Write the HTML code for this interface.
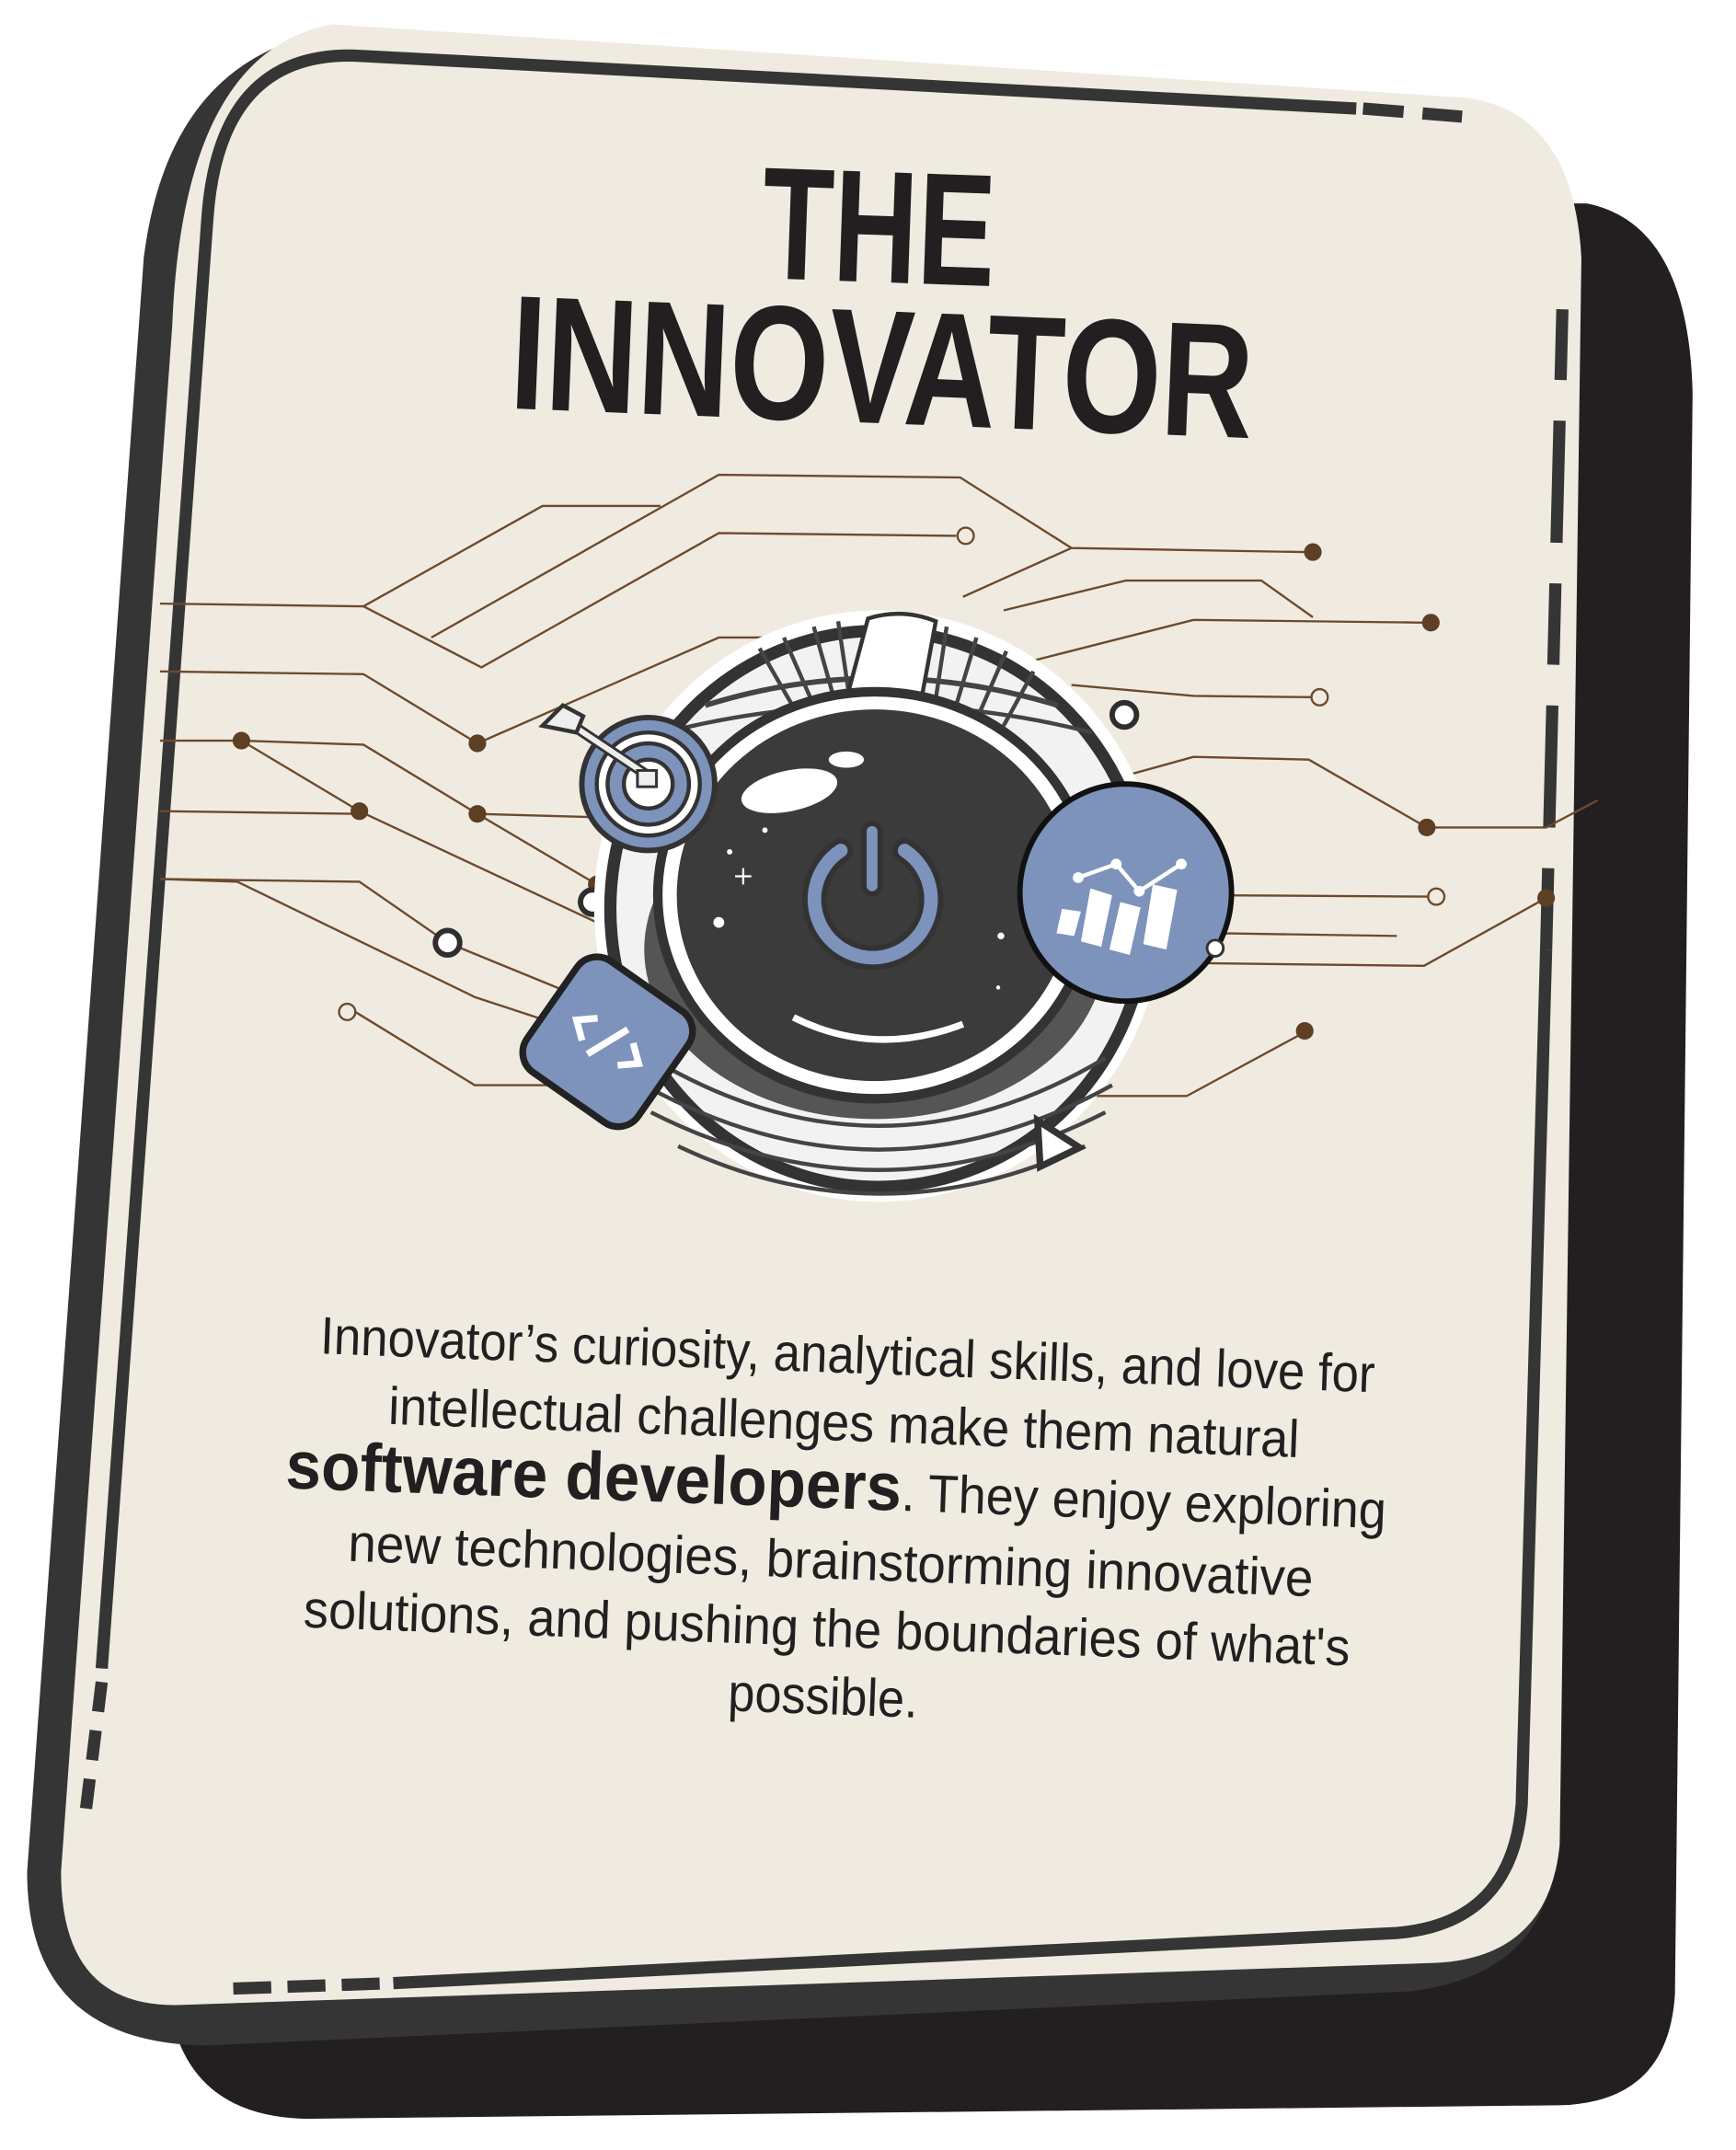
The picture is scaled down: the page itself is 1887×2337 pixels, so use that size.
<!DOCTYPE html>
<html><head><meta charset="utf-8"><style>
html,body{margin:0;padding:0;background:#fff;}
svg{display:block;}
</style></head><body>
<svg width="1887" height="2337" viewBox="0 0 1280 1585" preserveAspectRatio="none" xmlns="http://www.w3.org/2000/svg">
<path d="M200 150 L1170 150 Q1245 165 1248 290 L1235 1470 Q1230 1550 1150 1552 L225 1562 Q150 1560 130 1500 L130 150 Z" fill="#231f20"/>
<path d="M250 22 Q125 40 106 190 L20 1380 Q20 1505 150 1508 L1040 1468 Q1120 1458 1140 1400 L1150 200 Z" fill="#353535"/>
<path d="M245 18 L1080 72 Q1160 82 1166 190 L1150 1360 Q1142 1442 1060 1447 L135 1478 Q45 1482 45 1380 L127 240 Q135 38 245 18 Z" fill="#f0ebe0"/>
<g fill="none" stroke="#353535" stroke-width="9">
<path d="M1000 80 L262 41 Q162 38 153 160 L75 1230"/>
<path d="M75 1240 L62 1345" stroke-dasharray="22 14"/>
<path d="M172 1466 L290 1462" stroke-dasharray="28 12"/>
<path d="M290 1462 L1030 1425 Q1115 1418 1122 1330 L1140 700"/>
<path d="M1140 700 L1152 228" stroke-dasharray="60 30 90 30"/>
<path d="M1005 80 L1078 86" stroke-dasharray="30 14"/>
</g>
<g fill="#231f20" font-family="Liberation Sans, sans-serif" font-weight="bold">
<text x="648" y="208" text-anchor="middle" font-size="118" textLength="172" lengthAdjust="spacingAndGlyphs" transform="rotate(2 648 170)">THE</text>
<text x="650" y="312" text-anchor="middle" font-size="120" textLength="548" lengthAdjust="spacingAndGlyphs" transform="rotate(2.3 650 280)">INNOVATOR</text>
</g>
<g fill="none" stroke="#6b4a2f" stroke-width="1.6">
<path d="M118 445 L268 447 L400 373 L487 373"/>
<path d="M268 447 L355 492 L530 393 L705 395"/>
<path d="M318 470 L530 350 L708 352 L790 404 L962 407"/>
<path d="M118 495 L268 497 L352 548 L530 470 L690 470"/>
<path d="M118 546 L178 546 L265 598 L440 680 L470 680"/>
<path d="M178 546 L268 549 L352 600 L440 652 L480 652"/>
<path d="M118 598 L265 600"/>
<path d="M352 600 L460 603"/>
<path d="M118 648 L265 650 L330 695 L440 740 L470 740"/>
<path d="M118 648 L175 650 L350 735 L420 758"/>
<path d="M262 746 L350 800 L420 800"/>
<path d="M790 404 L710 440"/>
<path d="M750 490 L880 457 L1050 459"/>
<path d="M740 450 L830 428 L930 428 L968 455"/>
<path d="M790 505 L880 513 L968 514"/>
<path d="M800 580 L880 558 L965 560 L1052 610 L1140 610 L1178 590"/>
<path d="M900 660 L1054 661"/>
<path d="M880 710 L1050 712 L1140 662"/>
<path d="M900 688 L1030 690"/>
<path d="M790 808 L875 808 L960 762"/>
</g>
<g fill="#5e3f24">
<circle cx="968" cy="407" r="6.5"/><circle cx="1055" cy="459" r="6.5"/><circle cx="1052" cy="610" r="6.5"/>
<circle cx="1140" cy="662" r="6.5"/><circle cx="962" cy="760" r="6.5"/><circle cx="178" cy="546" r="6.5"/>
<circle cx="265" cy="598" r="6.5"/><circle cx="352" cy="548" r="6.5"/><circle cx="352" cy="600" r="6.5"/><circle cx="440" cy="652" r="6.5"/>
</g>
<g fill="#f0ebe0" stroke="#6b4a2f" stroke-width="1.6">
<circle cx="712" cy="395" r="6"/><circle cx="973" cy="514" r="6"/><circle cx="1059" cy="661" r="6"/><circle cx="256" cy="746" r="6"/>
</g>
<g fill="#fff" stroke="#2e2e2e" stroke-width="4">
<circle cx="829" cy="527" r="9"/><circle cx="437" cy="665" r="9"/><circle cx="330" cy="695" r="9"/>
</g>
<!-- helmet -->
<ellipse cx="648" cy="668" rx="210" ry="218" fill="#fff"/>
<ellipse cx="648" cy="670" rx="198" ry="205" fill="#f2f2f2" stroke="#333" stroke-width="9"/>
<g stroke="#444" stroke-width="3" fill="none">
<path d="M560 478 L590 530 M578 470 L600 520 M600 462 L615 515 M618 458 L626 512"/>
<path d="M680 458 L676 512 M698 462 L690 515 M720 470 L705 520 M742 480 L722 526 M762 495 L740 535"/>
<path d="M520 520 Q648 480 780 520" stroke-width="4"/>
<path d="M490 540 Q648 500 805 540" stroke-width="3"/>
<path d="M480 780 Q648 880 815 780 M475 800 Q648 895 820 800 M480 820 Q648 905 815 820 M500 845 Q648 915 800 845"/>
</g>
<path d="M640 456 Q665 448 690 458 L680 512 Q650 505 625 512 Z" fill="#fff" stroke="#333" stroke-width="3"/>
<ellipse cx="645" cy="700" rx="170" ry="125" fill="#444" opacity=".9"/>
<ellipse cx="645" cy="660" rx="160" ry="150" fill="#fff" stroke="#333" stroke-width="7"/>
<ellipse cx="645" cy="660" rx="146" ry="137" fill="#3b3b3b"/>
<ellipse cx="582" cy="583" rx="36" ry="15" fill="#fff" transform="rotate(-12 582 583)"/>
<ellipse cx="624" cy="560" rx="13" ry="6" fill="#fff"/>
<path d="M585 750 Q645 780 710 755" stroke="#fff" stroke-width="5" fill="none"/>
<g fill="#fff"><circle cx="538" cy="628" r="2"/><circle cx="530" cy="680" r="4"/><circle cx="564" cy="612" r="2"/><circle cx="738" cy="690" r="2.5"/><circle cx="736" cy="728" r="1.5"/></g>
<path d="M548 640 v12 M542 646 h12" stroke="#fff" stroke-width="1.5"/>
<path d="M620 627 A43 43 0 1 0 667 627" fill="none" stroke="#333" stroke-width="18" stroke-linecap="round"/>
<path d="M620 627 A43 43 0 1 0 667 627" fill="none" stroke="#7d93bc" stroke-width="10" stroke-linecap="round"/>
<path d="M643 613 L643 653" stroke="#333" stroke-width="16" stroke-linecap="round"/>
<path d="M643 613 L643 653" stroke="#7d93bc" stroke-width="8" stroke-linecap="round"/>
<circle cx="478" cy="578" r="49" fill="#7d93bc" stroke="#333" stroke-width="4"/>
<circle cx="478" cy="578" r="38" fill="#fff" stroke="#333" stroke-width="3"/>
<circle cx="478" cy="578" r="30" fill="#7d93bc" stroke="#333" stroke-width="3"/>
<circle cx="478" cy="578" r="18" fill="#fff" stroke="#333" stroke-width="3"/>
<path d="M412 528 L478 572" stroke="#333" stroke-width="8"/>
<path d="M412 528 L478 572" stroke="#eee" stroke-width="4"/>
<path d="M400 535 L415 520 L430 528 L425 540 Z" fill="#eee" stroke="#333" stroke-width="3"/>
<rect x="470" y="568" width="14" height="12" fill="#eee" stroke="#333" stroke-width="2"/>
<ellipse cx="830" cy="658" rx="78" ry="80" fill="#7d93bc" stroke="#111" stroke-width="4"/>
<g fill="#fff"><path d="M783 670 L797 672 L792 690 L779 688 Z"/><path d="M804 655 L820 660 L812 698 L797 694 Z"/><path d="M826 665 L841 669 L833 704 L818 700 Z"/><path d="M850 652 L868 656 L860 700 L843 696 Z"/></g>
<path d="M795 647 L823 637 L840 657 L871 637" stroke="#fff" stroke-width="3" fill="none"/>
<g fill="#fff"><circle cx="795" cy="647" r="4"/><circle cx="823" cy="637" r="4"/><circle cx="840" cy="657" r="4"/><circle cx="871" cy="637" r="4"/></g>
<circle cx="896" cy="699" r="6" fill="#fff" stroke="#333" stroke-width="2"/>
<rect x="398" y="718" width="100" height="100" rx="18" fill="#7d93bc" stroke="#222" stroke-width="5" transform="rotate(35 448 768)"/>
<g stroke="#fff" stroke-width="5" fill="none" transform="rotate(35 448 768)">
<path d="M432 758 L420 768 L432 778"/><path d="M464 758 L476 768 L464 778"/><path d="M455 752 L441 784"/>
</g>
<path d="M765 826 L796 846 L767 860 Z" fill="#fff" stroke="#333" stroke-width="5"/>
<g fill="#231f20" font-family="Liberation Sans, sans-serif" font-size="39" text-anchor="middle" transform="rotate(2.1 620 1110)">
<text x="621" y="1012" textLength="778" lengthAdjust="spacingAndGlyphs">Innovator’s curiosity, analytical skills, and love for</text>
<text x="620" y="1062" textLength="672" lengthAdjust="spacingAndGlyphs">intellectual challenges make them natural</text>
<text x="616" y="1112" textLength="812" lengthAdjust="spacingAndGlyphs"><tspan font-weight="bold" font-size="50">software developers</tspan>. They enjoy exploring</text>
<text x="614" y="1164" textLength="712" lengthAdjust="spacingAndGlyphs">new technologies, brainstorming innovative</text>
<text x="613" y="1214" textLength="772" lengthAdjust="spacingAndGlyphs">solutions, and pushing the boundaries of what's</text>
<text x="612" y="1264" textLength="140" lengthAdjust="spacingAndGlyphs">possible.</text>
</g>
</svg>
</body></html>
